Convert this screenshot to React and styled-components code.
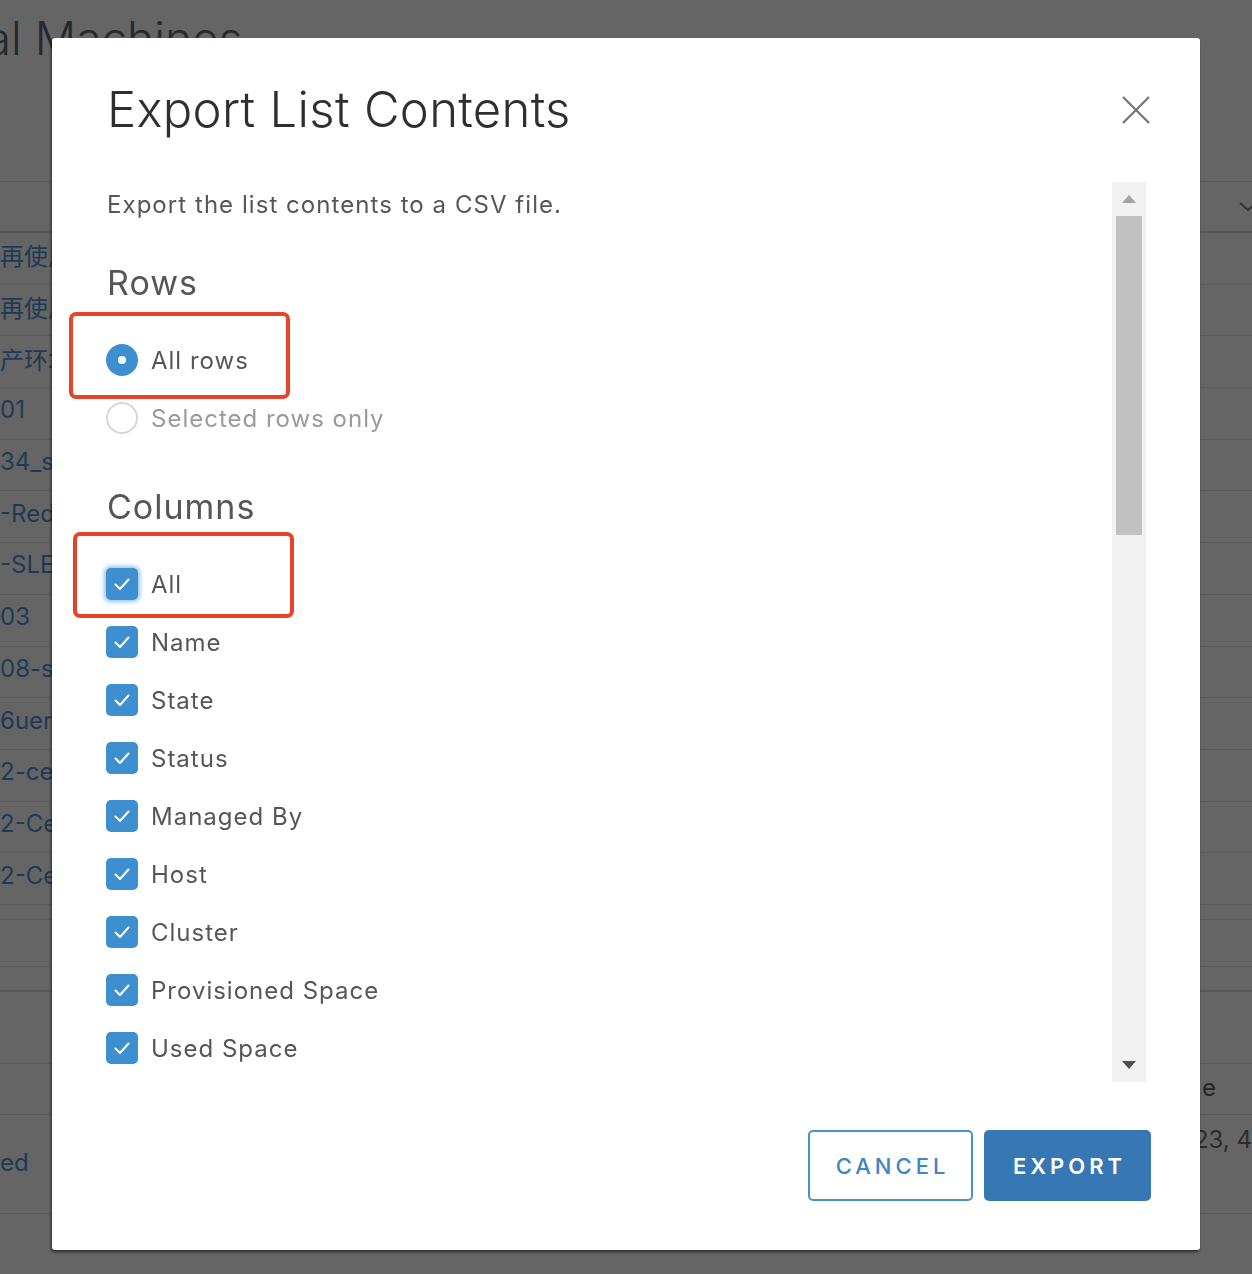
import React from "react";
import styled, { createGlobalStyle } from "styled-components";

const Global = createGlobalStyle`
  html, body { margin: 0; padding: 0; }
  body {
    background: #656565;
    font-family: "Inter", "Noto Sans", "Noto Sans CJK SC", sans-serif;
    width: 1252px;
    height: 1274px;
    overflow: hidden;
  }
`;

/* ---------- background page (dimmed) ---------- */
const Page = styled.div`
  width: 1252px;
  height: 1274px;
  overflow: hidden;
  display: flex;
  flex-direction: column;
`;

const PageTitle = styled.h1`
  margin: 10px 0 0 -114px;
  height: 171px;
  font-size: 46px;
  font-weight: 300;
  line-height: 56px;
  color: #26292e;
  white-space: nowrap;
`;

const Table = styled.div`
  display: flex;
  flex-direction: column;
  border-top: 1px solid #5a5a5a;
`;

const Row = styled.div`
  display: flex;
  justify-content: space-between;
  align-items: ${(p) => p.$align || "center"};
  height: ${(p) => p.$h}px;
  box-sizing: border-box;
  padding-bottom: ${(p) => p.$pb || 0}px;
  border-bottom: ${(p) => p.$bw || 1}px solid ${(p) => p.$bc || "#5a5a5a"};
  font-size: 24px;
  color: #1f3a55;
  white-space: nowrap;
  flex-shrink: 0;
`;

const Cell = styled.span`
  padding: ${(p) => p.$pad || "0"};
  color: ${(p) => p.$color || "inherit"};
`;

const Chevron = styled.svg`
  margin-right: -6px;
`;

/* ---------- modal ---------- */
const Overlay = styled.div`
  position: fixed;
  inset: 0;
  display: flex;
  justify-content: center;
  align-items: flex-start;
  padding-top: 38px;
`;

const Modal = styled.div`
  width: 1148px;
  height: 1212px;
  box-sizing: border-box;
  background: #fff;
  border-radius: 3px;
  box-shadow: -1px 2px 3px rgba(0, 0, 0, 0.55);
  padding: 42px 49px 49px 0;
  display: flex;
  flex-direction: column;
`;

const Header = styled.div`
  display: flex;
  align-items: center;
  justify-content: space-between;
  height: 60px;
  margin-left: 55px;
`;

const Title = styled.h2`
  margin: 0;
  font-size: 49px;
  font-weight: 300;
  line-height: 60px;
  color: #2f2f2f;
  letter-spacing: 0.3px;
`;

const CloseButton = styled.button`
  border: 0;
  background: none;
  padding: 0;
  width: 30px;
  height: 30px;
  display: flex;
  align-items: center;
  justify-content: center;
  cursor: pointer;
`;

const Body = styled.div`
  margin-top: 42px;
  height: 900px;
  display: flex;
  margin-right: 5px;
`;

const Content = styled.div`
  flex: 1;
  overflow: hidden;
  display: flex;
  flex-direction: column;
  padding-left: 55px;
`;

const Description = styled.p`
  margin: 0;
  font-size: 24px;
  line-height: 46px;
  color: #565656;
  letter-spacing: 1.05px;
`;

const SectionHeading = styled.h3`
  margin: ${(p) => p.$mt}px 0 23px;
  font-size: 34px;
  font-weight: 400;
  line-height: 50px;
  color: #565656;
  letter-spacing: 1px;
`;

const OptionRow = styled.label`
  position: relative;
  display: flex;
  align-items: center;
  gap: 13px;
  height: 58px;
  font-size: 24px;
  color: ${(p) => (p.$disabled ? "#9a9a9a" : "#565656")};
  letter-spacing: 1px;
  flex-shrink: 0;
`;

const Radio = styled.span`
  width: 32px;
  height: 32px;
  box-sizing: border-box;
  border-radius: 50%;
  margin-left: -1px;
  display: flex;
  align-items: center;
  justify-content: center;
  background: ${(p) => (p.$checked ? "#3d8fd0" : "#fff")};
  border: ${(p) => (p.$checked ? "none" : "2px solid #d6d6d6")};
  &::after {
    content: "";
    display: ${(p) => (p.$checked ? "block" : "none")};
    width: 8px;
    height: 8px;
    border-radius: 50%;
    background: #fff;
  }
`;

const Box = styled.span`
  width: 32px;
  height: 32px;
  margin-left: -1px;
  border-radius: 5px;
  background: #3d8fd0;
  display: flex;
  align-items: center;
  justify-content: center;
  box-shadow: ${(p) => (p.$focus ? "0 0 4px 2px rgba(61,143,208,0.55)" : "none")};
`;

const Annotation = styled.span`
  position: absolute;
  left: ${(p) => p.$l}px;
  top: ${(p) => p.$t}px;
  width: ${(p) => p.$w}px;
  height: ${(p) => p.$h}px;
  box-sizing: border-box;
  border: 4px solid #e6432b;
  border-radius: 7px;
  pointer-events: none;
`;

const Scrollbar = styled.div`
  width: 34px;
  background: #f1f1f1;
  display: flex;
  flex-direction: column;
  align-items: center;
`;

const ScrollArrow = styled.div`
  height: 34px;
  width: 100%;
  display: flex;
  align-items: center;
  justify-content: center;
  flex-shrink: 0;
`;

const Thumb = styled.div`
  width: 26px;
  height: 319px;
  background: #c1c1c1;
  flex-shrink: 0;
`;

const Spacer = styled.div`
  flex: 1;
`;

const Footer = styled.div`
  margin-top: 48px;
  display: flex;
  justify-content: flex-end;
  gap: 11px;
`;

const Button = styled.button`
  height: 71px;
  width: ${(p) => p.$w}px;
  box-sizing: border-box;
  border-radius: 5px;
  font-family: "Inter", "Noto Sans", sans-serif;
  font-size: 22px;
  letter-spacing: 4px;
  text-transform: uppercase;
  cursor: pointer;
  padding: 0 0 0 4px;
  ${(p) =>
    p.$primary
      ? `background:#3677b4;color:#fff;border:2px solid #3677b4;font-weight:600;`
      : `background:#fff;color:#3f86c4;border:2px solid #4a90cc;font-weight:500;`}
`;

const Check = () => (
  <svg width="32" height="32" viewBox="0 0 32 32">
    <path d="M9.5 16.5 L14 21 L22.5 11.5" fill="none" stroke="#fff" strokeWidth="2" strokeLinecap="round" strokeLinejoin="round" />
  </svg>
);

const columns = [
  "Name",
  "State",
  "Status",
  "Managed By",
  "Host",
  "Cluster",
  "Provisioned Space",
  "Used Space",
  "Guest OS",
  "IP Address",
];

const leftTexts = [
  "再使用",
  "再使用",
  "产环境",
  "01",
  "34_s",
  "-Red",
  "-SLE",
  "03",
  "08-sp",
  "6uer",
  "2-ce",
  "2-Ce",
  "2-Ce",
];

export default function App() {
  return (
    <>
      <Global />
      <Page>
        <PageTitle>Virtual Machines</PageTitle>
        <Table>
          <Row $h={51} $bw={2} $bc="#555">
            <Cell />
            <Chevron width="20" height="12" viewBox="0 0 20 12">
              <path d="M2 2 L10 9 L18 2" fill="none" stroke="#333" strokeWidth="2" />
            </Chevron>
          </Row>
          {leftTexts.map((t, i) => (
            <Row key={i} $h={51.7} $pb={7}>
              <Cell>{t}</Cell>
              <Cell />
            </Row>
          ))}
          <Row $h={15} />
          <Row $h={47} />
          <Row $h={25} $bw={2} $bc="#575757" />
          <Row $h={72} />
          <Row $h={51} $pb={2}>
            <Cell />
            <Cell $pad="0 36px 0 0" $color="#262626">e</Cell>
          </Row>
          <Row $h={99} $align="flex-start">
            <Cell $pad="33px 0 0 0">ed</Cell>
            <Cell $pad="10px 0 0 0" $color="#2b2b2b">123, 4</Cell>
          </Row>
        </Table>
      </Page>

      <Overlay>
        <Modal role="dialog" aria-labelledby="export-title">
          <Header>
            <Title id="export-title">Export List Contents</Title>
            <CloseButton aria-label="Close">
              <svg width="30" height="30" viewBox="0 0 30 30">
                <path d="M2 2 L28 28 M28 2 L2 28" stroke="#747474" strokeWidth="2.2" fill="none" />
              </svg>
            </CloseButton>
          </Header>

          <Body>
            <Content>
              <Description>Export the list contents to a CSV file.</Description>

              <SectionHeading $mt={30}>Rows</SectionHeading>
              <OptionRow>
                <Radio $checked />
                All rows
                <Annotation $l={-38} $t={-19} $w={221} $h={87} />
              </OptionRow>
              <OptionRow $disabled>
                <Radio />
                Selected rows only
              </OptionRow>

              <SectionHeading $mt={35}>Columns</SectionHeading>
              <OptionRow>
                <Box $focus>
                  <Check />
                </Box>
                All
                <Annotation $l={-34} $t={-23} $w={221} $h={86} />
              </OptionRow>
              {columns.map((c) => (
                <OptionRow key={c}>
                  <Box>
                    <Check />
                  </Box>
                  {c}
                </OptionRow>
              ))}
            </Content>

            <Scrollbar>
              <ScrollArrow>
                <svg width="14" height="8" viewBox="0 0 14 8">
                  <path d="M0 8 L7 0 L14 8 Z" fill="#a3a3a3" />
                </svg>
              </ScrollArrow>
              <Thumb />
              <Spacer />
              <ScrollArrow>
                <svg width="14" height="8" viewBox="0 0 14 8">
                  <path d="M0 0 L14 0 L7 8 Z" fill="#505050" />
                </svg>
              </ScrollArrow>
            </Scrollbar>
          </Body>

          <Footer>
            <Button $w={165}>Cancel</Button>
            <Button $w={167} $primary>Export</Button>
          </Footer>
        </Modal>
      </Overlay>
    </>
  );
}
